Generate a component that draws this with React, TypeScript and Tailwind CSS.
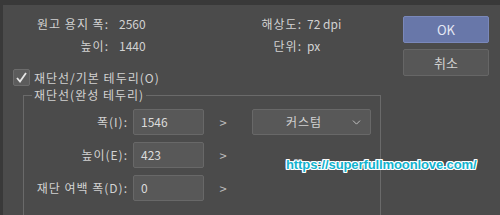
import { ChevronDown } from "lucide-react";

const font = { fontFamily: '"Noto Sans CJK KR", "Liberation Sans", sans-serif' };

function Field({ label, value }: { label: string; value: string }) {
    return (
        <div className="flex items-center h-[26px]">
            <div className="w-[109px] text-right pr-[5px] tracking-[1px]">{label}</div>
            <div className="w-[71px] h-[26px] rounded-[2px] border border-[#686868] bg-[#585858] pl-[7px] flex items-center text-[#dcdcdc]">
                {value}
            </div>
            <div className="w-[38px] text-center text-[#bdbdbd] text-[13px]">&gt;</div>
        </div>
    );
}

export default function App() {
    return (
        <div
            className="relative w-[500px] h-[215px] overflow-hidden bg-[#4b4b4b] border-t-[5px] border-l-[3px] border-[#393939] text-[12px] text-[#d2d2d2] leading-none"
            style={font}
        >
            <div className="flex">
                {/* left column */}
                <div className="flex-1">
                    <div className="flex pt-[13px]">
                        <div className="grid grid-cols-[106px_auto] gap-x-[10px] gap-y-[10px] w-[252px]">
                            <div className="text-right tracking-[1px]">원고 용지 폭:</div>
                            <div>2560</div>
                            <div className="text-right tracking-[1px]">높이:</div>
                            <div>1440</div>
                        </div>
                        <div className="grid grid-cols-[47px_auto] gap-x-[5px] gap-y-[10px]">
                            <div className="text-right tracking-[1px]">해상도:</div>
                            <div>72 dpi</div>
                            <div className="text-right tracking-[1px]">단위:</div>
                            <div>px</div>
                        </div>
                    </div>

                    <div className="flex items-center gap-[4px] mt-[17px] ml-[10px]">
                        <div className="w-[17px] h-[17px] rounded-[2px] border border-[#6c6c6c] bg-[#5c5c5c] flex items-center justify-center">
                            <svg width="13" height="13" viewBox="0 0 13 13">
                                <path d="M2 7 L5 10.5 L11 2" fill="none" stroke="#e6e6e6" strokeWidth="1.8" />
                            </svg>
                        </div>
                        <span className="tracking-[1px]">재단선/기본 테두리(O)</span>
                    </div>

                    {/* group box */}
                    <div className="relative mt-[9px] ml-[20px] w-[358px] h-[140px] border-t border-l border-r border-[#6a6a6a]">
                        <div className="absolute -top-[7px] left-[8px] px-[2px] bg-[#4b4b4b] tracking-[1px]">
                            재단선(완성 테두리)
                        </div>
                        <div className="flex flex-col gap-[7px] pt-[13px]">
                            <div className="flex items-center">
                                <Field label="폭(I):" value="1546" />
                                <div className="ml-[10px] w-[119px] h-[26px] rounded-[2px] border border-[#686868] bg-[#585858] flex items-center justify-between pl-[33px] pr-[7px] tracking-[1px]">
                                    <span>커스텀</span>
                                    <ChevronDown size={13} strokeWidth={1.6} color="#cfcfcf" />
                                </div>
                            </div>
                            <Field label="높이(E):" value="423" />
                            <Field label="재단 여백 폭(D):" value="0" />
                        </div>
                    </div>
                </div>

                {/* right column buttons */}
                <div className="w-[97px] pt-[11px] flex flex-col gap-[6px]">
                    <div className="w-[86px] h-[27px] rounded-[2px] border border-[#7a88ba] bg-[#6877a9] flex items-center justify-center text-[#e4e8f4] text-[13px]">
                        OK
                    </div>
                    <div className="w-[86px] h-[27px] rounded-[2px] border border-[#666666] bg-[#575757] flex items-center justify-center text-[13px]">
                        취소
                    </div>
                </div>
            </div>

            <div
                className="absolute left-[283px] top-[153px] text-[13px] tracking-[-0.1px] text-[#12b3cf] font-bold"
                style={{
                    fontFamily: '"Liberation Sans", sans-serif',
                    textShadow:
                        "1px 0 0 #fff, -1px 0 0 #fff, 0 1px 0 #fff, 0 -1px 0 #fff, 1px 1px 0 #fff, -1px -1px 0 #fff, 1px -1px 0 #fff, -1px 1px 0 #fff",
                }}
            >
                https://superfullmoonlove.com/
            </div>
        </div>
    );
}
